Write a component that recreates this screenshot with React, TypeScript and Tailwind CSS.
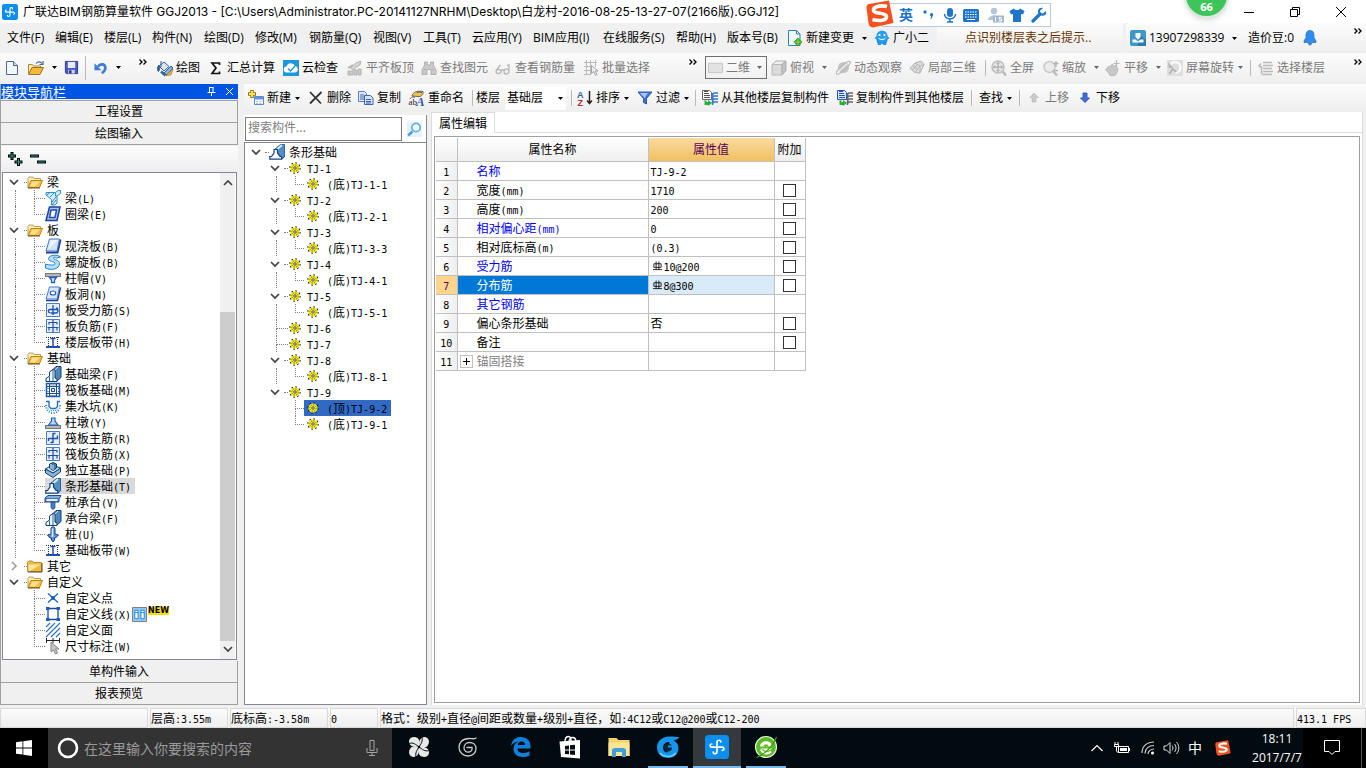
import React from "react";

/* ---------- fonts ---------- */

const UI_FONT = "font-['Open_Sans','Noto_Sans_CJK_SC',sans-serif]";
const SONG_FONT = "font-['Noto_Sans_CJK_SC',sans-serif]";

/* Latin runs sit on a six pixel grid, beside twelve pixel Chinese glyphs. */
function Mixed({ children }: { children: string }) {
  const parts = children.split(/([\x20-\x7e]+)/).filter(Boolean);
  return (
    <span className={`${SONG_FONT} whitespace-pre`}>
      {parts.map((p, i) =>
        /^[\x20-\x7e]/.test(p) ? (
          <span key={i} className="font-['DejaVu_Sans_Mono',monospace] text-[10px] leading-none">
            {p}
          </span>
        ) : (
          <span key={i}>{p}</span>
        )
      )}
    </span>
  );
}

/* ---------- icons ---------- */

const B = "#1f5fae";
const art: Record<string, React.ReactNode> = {
  file: (
    <>
      <path d="M2.5 1.5h7l4 4v9h-11z" fill="#f3f8ff" stroke="#47678f" />
      <path d="M9.500 1.500v4h4" fill="#cfdff2" stroke="#47678f" />
    </>
  ),
  open: (
    <>
      <path d="M.5 13.5v-9h4l1 1.500h7v3" fill="#fbe9ac" stroke="#a8893c" />
      <path d="M.5 14.500 4 7.500h11.500L12 14.500z" fill="#f2b93b" stroke="#9a7422" />
      <path d="M8 3.500c2-2.500 4.500-2 6 0M15 1v3.500h-3.500" fill="none" stroke="#4a6b94" strokeWidth="1.200" />
    </>
  ),
  folderOpen: (
    <>
      <path d="M1 13.500v-9l1-1.500h4l1 1.500h6.500v3" fill="#fbeeb9" stroke="#c2a052" />
      <path d="M1 13.500 4 6.500h11.500L12.500 13.500z" fill="#f7c23a" stroke="#b58526" />
      <path d="M3 12.500 5 7.500h8l-5 5z" fill="#fde08a" />
      <path d="M1 14h12" stroke="#6e531c" />
    </>
  ),
  folder: (
    <>
      <path d="M.5 13.500v-9l1-1.500h4l1 1.500h8v9z" fill="#f3b93a" stroke="#b5904a" />
      <path d="M1.500 6.500h12L3 13H1.500z" fill="#fce6a2" />
      <path d="M15 5v9H1" fill="none" stroke="#5c4a20" />
    </>
  ),
  save: (
    <>
      <path d="M1.500 1.500h13v13h-12l-1-1z" fill="#4a56c8" stroke="#2c3590" />
      <path d="M4 2h8v6.500H4z" fill="#e8ebfa" />
      <path d="M4.500 10.500h7v4h-7z" fill="#cdd3ea" />
      <path d="M5.500 11h2.500v3.500H5.500z" fill="#252f7d" />
    </>
  ),
  undo: (
    <>
      <path d="M4.500 6.500C7 2.500 13 3 13 8c0 3-2 4.500-4 6" fill="none" stroke="#3e7ad8" strokeWidth="3" />
      <path d="M.5 2.500v8h8z" fill="#3e7ad8" />
    </>
  ),
  draw: (
    <>
      <path d="M2 6l5-4 5 4.500-5 4.500z" fill="#dbe7f5" stroke="#345f95" />
      <path d="M4 1v6M2 5C0 7 0 10 1.500 11.500 3 9 3 7.500 2.500 6" fill="#345f95" stroke="#345f95" />
      <path d="M7 13l7-7 2 2-6 7z" fill="#8db2e2" stroke="#345f95" />
      <path d="M9 15.500 16 9l-2 6z" fill="#efb93b" stroke="#8c6a1c" strokeWidth=".6" />
      <path d="M4 11.500l4.500 4" stroke="#345f95" strokeWidth="2.500" />
    </>
  ),
  sigma: <path d="M11.500 5V3H4l4 5-4 5.500h7.500v-2" fill="none" stroke="#111" strokeWidth="1.700" />,
  cloud: (
    <>
      <path d="M0 0h16v16H0z" fill="#2094dc" />
      <path d="M4 12.500a3 3 0 0 1-.5-6 4.500 4.500 0 0 1 8.500-.5 3.300 3.300 0 0 1 0 6.500z" fill="#fff" />
      <path d="M5 8.500l2.500 2.500L12 6" fill="none" stroke="#2094dc" strokeWidth="1.400" />
    </>
  ),
  level: (
    <>
      <path d="M3 8l6-5 5-2-1 4-4 2-2 3z" fill="#d4d4d4" stroke="#b5b5b5" />
      <path d="M1 11h5v4H1zM7 10h3v5H7zM11 9h3v6h-3z" fill="#c8c8c8" stroke="#b5b5b5" />
      <path d="M1 8l5-3" stroke="#b5b5b5" strokeWidth="1.500" />
    </>
  ),
  binoc: (
    <path d="M3.500 2h3v3h3V2h3v3l2.500 5v4.500h-5V9.500H6v5H1V10l2.500-5z M3 9.500h2M11 9.500h2" fill="#c9c9c9" stroke="#a8a8a8" strokeWidth=".8" />
  ),
  glasses: (
    <path d="M0 11.500a2.500 2 0 1 0 5 0 2.500 2 0 1 0-5 0M5 11c1-1.500 2-1.500 3-.5M8 11.500a2.500 2.500 0 1 0 5 0 2.500 2.500 0 1 0-5 0M0 10.500l4.500-5.500M13 10.500V5l-2 .5" fill="none" stroke="#b9b9b9" strokeWidth="1.400" />
  ),
  batch: (
    <>
      <path d="M1 2.500h13M1 6.500h8M1 10.500h6M1 14.500h6M3.500 0v15M7.500 0v15M12.500 0v7" fill="none" stroke="#b9b9b9" />
      <path d="M8.500 5.500v8l2-2 2 4 1.500-1-2-3.500h3z" fill="#eee" stroke="#a5a5a5" />
    </>
  ),
  flat: <path d="M.5 3.500h15v10H.5z" fill="#e2e2e2" stroke="#c4c4c4" />,
  cube: (
    <>
      <path d="M1 4.500 5 1h10L11 4.500z" fill="#eee" stroke="#b0b0b0" />
      <path d="M1 4.500h10V15H1z" fill="#dadada" stroke="#b8b8b8" />
      <path d="M11 4.500 15 1v10l-4 4z" fill="#c2c2c2" stroke="#b0b0b0" />
    </>
  ),
  orbit: (
    <>
      <circle cx="8.500" cy="7.500" r="5.500" fill="#c4c4c4" />
      <path d="M1.500 14C0 11 12 0 15 1.500S4 16 1.500 14z" fill="none" stroke="#bcbcbc" strokeWidth="1.300" />
      <path d="M4 11 12 4" stroke="#eee" strokeWidth="1.300" />
    </>
  ),
  local3d: (
    <path d="M1 8.500 6 3l5 3-5 6.500zM3.500 5.500l5 4M6 3 12 1l3 3.500-4 1.500M15 4.500 11 13l-5-.5M8.500 4.500l-5 5.500M11 6v7" fill="#dcdcdc" stroke="#b3b3b3" />
  ),
  full: (
    <>
      <circle cx="7" cy="7" r="6" fill="#e6e6e6" stroke="#bdbdbd" strokeWidth="1.500" />
      <path d="M7 2.500v9M2.500 7h9M5.500 4 7 2.500 8.500 4M5.500 10 7 11.500 8.500 10M4 5.500 2.500 7 4 8.500M10 5.500 11.500 7 10 8.500" fill="none" stroke="#a2a2a2" />
      <path d="M11.500 11.500l3.500 4" stroke="#b8b8b8" strokeWidth="2.500" />
    </>
  ),
  zoom: (
    <>
      <circle cx="6.500" cy="7" r="5.500" fill="#ececec" stroke="#c8c8c8" strokeWidth="1.500" />
      <path d="M13 1v6M10.500 3.500h5M11 10.500h4" stroke="#b0b0b0" strokeWidth="1.300" />
      <path d="M10 11l4 4.500" stroke="#bcbcbc" strokeWidth="2.500" />
    </>
  ),
  hand: (
    <>
      <path d="M2 8l2-2 2 1V5l2-.5 1 1.500 2-.5.5 2 1.500 1-1 4-2 3H5L3 12 .5 10z" fill="#c8c8c8" stroke="#bcbcbc" />
      <path d="M11.500 0v7M8.500 3.500h6" stroke="#b8b8b8" strokeWidth="1.200" />
    </>
  ),
  rotate: (
    <>
      <path d="M0 0h16v16H0z" fill="#dedede" />
      <path d="M3 5.500A5.500 5.500 0 1 1 8.500 13" fill="none" stroke="#fafafa" strokeWidth="2.500" />
      <path d="M1.500 2v6h5z" fill="#b8b8b8" />
      <path d="M2.500 14l3-5 4 3" fill="none" stroke="#a8a8a8" strokeWidth="1.400" />
    </>
  ),
  floors: (
    <path d="M5 2.500h9M5 5.500h10M5 8.500h9M5 11.500h10M4 14.500h10M3 3.500 1 6l2.500 2M3.500 6v8" fill="none" stroke="#b9b9b9" strokeWidth="1.500" />
  ),
  create: (
    <>
      <path d="M6.500 6.500h9v8h-9z" fill="#fff" stroke="#5a8ad0" />
      <path d="M7 7h8v2.500H7z" fill="#5f93e8" />
      <path d="M8 11.500h2M11.500 11.500h2M8 13.500h2M11.500 13.500h2" stroke="#9fbdea" />
      <path d="M4 0v8M0 4h8" stroke="#8a7420" strokeWidth="3.500" />
      <path d="M4 1v6M1 4h6" stroke="#ffe24a" strokeWidth="2" />
    </>
  ),
  del: <path d="M2 2 13 13.500M13.500 2 2 13.500" fill="none" stroke="#333" strokeWidth="1.800" />,
  copy: (
    <>
      <path d="M.5 1.500h6l2 2v8h-8z" fill="#dfe9fa" stroke="#5a7fc8" />
      <path d="M2 5h4M2 7h4M2 9h4" stroke="#3b64b5" />
      <path d="M6.500 5.500h6l2.500 2.500v6.500H6.500z" fill="#d6e3fb" stroke="#3b64b5" />
      <path d="M8 9.500h5M8 11.500h5M8 13h5" stroke="#3b64b5" />
    </>
  ),
  rename: (
    <>
      <path d="M3 6C4 2 8 .5 14 1.500c1 3-2 5.500-5 5z" fill="#efc34d" stroke="#666" />
      <path d="M8 3c2-1.500 4-1 5 0M1 9c2-3 4-2 5-1" fill="none" stroke="#555" />
      <text x="-.5" y="15" fontSize="9" fontFamily="Liberation Serif" fill="#222">ab</text>
      <text x="7" y="15.500" fontSize="13" fontStyle="italic" fontWeight="bold" fontFamily="Liberation Serif" fill="#2b5cad">A</text>
    </>
  ),
  sort: (
    <>
      <text x="0" y="7.500" fontSize="9" fontWeight="bold" fontFamily="Liberation Sans" fill="#3c5fa8">A</text>
      <text x=".5" y="15.500" fontSize="9" fontWeight="bold" fontFamily="Liberation Sans" fill="#a8323c">Z</text>
      <path d="M12.500 1v12.500M10 10.500l2.500 3 2.500-3" fill="none" stroke="#222" strokeWidth="1.500" />
    </>
  ),
  filter: (
    <>
      <path d="M1 2h14L9.500 8.500V14l-3-1.500v-4z" fill="#3f73dc" stroke="#2b56b4" />
      <path d="M3 3h8L7.500 8z" fill="#a8c5fa" />
    </>
  ),
  copyFrom: (
    <>
      <path d="M.5.5h7l2 2v7h-9z" fill="#fff" stroke="#666" />
      <path d="M2 3.500h5M2 5.500h6M2 7.500h6M2 1.500h4" stroke="#555" />
      <path d="M2.500 10.500v4.500h3.500v1l4-3-4-3v2H4.500v-1.500z" fill="#26b33a" />
      <path d="M10.500 4.500 12 3h4M10.500 7.500 12 6h4M10.500 10.500 12 9h4M10.500 13.500 12 12h4M10.500 3v12" fill="none" stroke="#3a76d0" strokeWidth="1.500" />
    </>
  ),
  copyTo: (
    <>
      <path d="M.5.5h7l2 2v7h-9z" fill="#dce8ff" stroke="#2451b8" />
      <path d="M2 3.500h5M2 5.500h6M2 7.500h6M2 1.500h4" stroke="#2451b8" />
      <path d="M2.500 10.500v4.500h3.500v1l4-3-4-3v2H4.500v-1.500z" fill="#26b33a" />
      <path d="M10.500 4.500 12 3h4M10.500 7.500 12 6h4M10.500 10.500 12 9h4M10.500 13.500 12 12h4M10.500 3v12" fill="none" stroke="#666" strokeWidth="1.500" />
    </>
  ),
  up: <path d="M8 3l4.500 4.500H10V12H6V7.500H3.500z" fill="#c9c9c9" stroke="#b8b8b8" strokeWidth=".6" />,
  down: <path d="M8 12.500 12.500 8H10V3H6v5H3.500z" fill="#3f6fe0" stroke="#2546a0" strokeWidth=".8" />,
  change: (
    <>
      <path d="M1.500.5h8l3.500 3.500v11.500H1.500z" fill="#eef8fd" stroke="#2d83ad" />
      <path d="M9.500.5V4H13" fill="none" stroke="#2d83ad" />
      <path d="M11 7.500 15.500 12 11 16.500l-4.500-4.500z" fill="#3fa023" />
      <path d="M11 9v6M8 12h6" stroke="#8ae05c" />
    </>
  ),
  mascot: (
    <>
      <path d="M3 6C1 1 15 1 13 6l2.500 2-2 1.500c0 2.500-1 3-1.500 5.500H9.500L8 13.500 6.500 15H4c-.5-2.500-1.500-3-1.500-5.500L.5 8z" fill="#2196e8" />
      <circle cx="8" cy="6" r="5.500" fill="#2aa0ee" />
      <circle cx="5.500" cy="5" r="1.100" fill="#fff" />
      <circle cx="10.500" cy="5" r="1.100" fill="#fff" />
      <path d="M4.500 8c1.500 2 5.500 2 7 0" fill="none" stroke="#fff" />
    </>
  ),
  user: (
    <>
      <rect width="16" height="16" rx="2" fill="#3f97cb" />
      <path d="M11 6l5 4v6H7z" fill="#2f7cab" />
      <path d="M5.500 3h5v4L8 9.500 5.500 7z" fill="#fff" />
      <path d="M2.500 9.500h3L8 11.500l2.500-2h3v3h-11z" fill="#fff" />
    </>
  ),
  bell: <path d="M8 .5c4.500 0 4 4.500 4 7l2 3.500v1.500H2V11l2-3.500c0-2.500-.5-7 4-7zM6 13.500h4l-2 2z" fill="#2d8cf0" stroke="#1c5fae" strokeWidth=".6" />,
  search: (
    <>
      <path d="M1 1h15v15H1z" fill="#e6f3fc" />
      <path d="M6.500 10.500 2 14.500" stroke="#4b9ed8" strokeWidth="2.400" />
      <circle cx="10" cy="6.500" r="4.200" fill="#fff" stroke="#5fb2e8" strokeWidth="1.700" />
    </>
  ),
  beam: (
    <>
      <path d="M1 2.500h9.500L13 .5h2.500v3L12 6v7l-2 2H6.500V9.500L1 5z" fill="#d5ecfc" stroke="#2a8fd0" />
      <path d="M2 5l3-2.500M5 7l4.500-4.500M7 12l4-5M7 15l4-5M10.500 2.500V6H12" fill="none" stroke="#2a8fd0" />
    </>
  ),
  ring: (
    <>
      <path d="M4.500 1h10.500L12 14.500H1z" fill="#a9c4ee" stroke="#1c3f9c" strokeWidth="1.500" />
      <path d="M6 4h5.500L10 11.500H4.500z" fill="#fff" stroke="#1c4fb0" strokeWidth="1.500" />
    </>
  ),
  slab: (
    <>
      <path d="M1 14.500h11.500L15.500 1.500" fill="none" stroke="#1c3f9c" strokeWidth="2" />
      <path d="M4.500 1h10L12 13H1z" fill="#d0e2fc" stroke="#4a78c8" />
      <path d="M5.500 2h7L4 11z" fill="#eef5ff" />
    </>
  ),
  spiral: (
    <path d="M15.500 3C12 0 4 1 3.500 4.500S10 7 10 9.500 4 11 .5 10v4c6 3 14 1 14-4.500 0-4-6-3.500-6-5.500 0-1 2-1 3 0z" fill="#b5def7" stroke="#1f82c4" />
  ),
  cap: (
    <>
      <path d="M0 3h16v4H0z" fill="#777" />
      <path d="M1 5h14" stroke="#ccc" strokeWidth="1.500" />
      <path d="M4.500 7.500h7l-2 2.500v2.500h-3V10z" fill="#dbeafc" stroke="#1f5fc4" strokeWidth="1.300" />
    </>
  ),
  hole: (
    <>
      <path d="M1 14.500h11.500L15.500 1.500" fill="none" stroke="#1c3f9c" strokeWidth="1.500" />
      <path d="M4.500 1h10L12 13H1z" fill="#d9e8fd" stroke="#4a78c8" />
      <ellipse cx="8" cy="7" rx="2.700" ry="2" fill="#fff" stroke="#2560c8" strokeWidth="1.200" />
    </>
  ),
  rebarS: (
    <>
      <path d="M1.500 1.500h13v13h-13z" fill="#e5effc" stroke="#4a7cc8" />
      <path d="M8 3v10M5 11C2.500 10 3 7.500 5 7.500h7.500c1 0 .5 3.500-1.500 3.500H5.500M11.500 5.500l1.500 2" fill="none" stroke="#1f4fae" strokeWidth="1.300" />
    </>
  ),
  rebarF: (
    <>
      <path d="M1.500 1.500h13v13h-13z" fill="#e5effc" stroke="#4a7cc8" />
      <path d="M8 2v12M4 6.500v-2h8v2M4 12.500v-3M12 12.500v-3M2.500 9.500h11" fill="none" stroke="#1f4fae" strokeWidth="1.200" />
    </>
  ),
  rebarR: (
    <>
      <path d="M1.500 1.500h13v13h-13z" fill="#e5effc" stroke="#4a7cc8" />
      <path d="M8 3.500h2.500M8 3v10M5.500 12.500H8M3.500 8.500h9v-3M3.500 8v3" fill="none" stroke="#1f4fae" strokeWidth="1.400" />
    </>
  ),
  strip: (
    <>
      <path d="M1 13h14" stroke="#1f4fae" strokeWidth="2" />
      <path d="M5.500 4.500h5M8 4.500v8" stroke="#1f4fae" strokeWidth="1.500" />
      <path d="M3.500 3v9M12.500 3v9M1 3.500h14" stroke="#333" strokeDasharray="1 1" />
    </>
  ),
  fbeam: (
    <>
      <path d="M7 4.500 11 .5h5v11L12 15z" fill="#4f86b8" stroke="#123f70" />
      <path d="M9 5 13 1" stroke="#c9e0f2" />
      <path d="M1 15.500v-3L4.500 10V6L8 3.500l2 .5v8l2 1v2.500z" fill="#eef5fc" stroke="#123f70" />
      <path d="M4.500 10.500V15M8 4v11" stroke="#2f6aa0" />
    </>
  ),
  raft: (
    <>
      <path d="M1.500 1.500h13v13h-13z" fill="#fff" stroke={B} strokeWidth="1.500" />
      <path d="M4.500 2v12M11.500 2v12M2 4.500h12M2 11.500h12" fill="none" stroke="#174c92" />
      <path d="M6.500 6.500h3v3h-3zM6 2.500v1M8 2.500v1M10 2.500v1M6 13v1M8 13v1M10 13v1M2.500 6.500h1M2.500 9.500h1M13 6.500h1M13 9.500h1" fill="#dce9f7" stroke="#174c92" />
    </>
  ),
  pit: (
    <>
      <path d="M1 3.500h3v5l2 2h4.500l2-2v-5H15" fill="none" stroke="#1f70c8" strokeWidth="1.400" />
      <path d="M1 7c0 5 3 8 7 8s7-3 7-8" fill="none" stroke="#2f80d4" strokeWidth="2" strokeDasharray="1 1.500" />
      <path d="M3 10.500l2 2h6l2-2" fill="none" stroke="#2f80d4" strokeDasharray="1 1" />
    </>
  ),
  pier: (
    <>
      <path d="M0 11h16v4H0z" fill="#777" />
      <path d="M1 13h14" stroke="#ccc" strokeWidth="1.500" />
      <path d="M3.500 11 6.500 7V4h3.500v3l3 4z" fill="#b9d4f4" stroke="#1f5fb8" strokeWidth="1.200" />
    </>
  ),
  isolated: (
    <>
      <path d="M.5 7 8 11l7.500-5v4L8 15.500.5 11z" fill="#8fb6da" stroke="#123f70" />
      <path d="M.5 7 7 3l8.500 3L8 11z" fill="#cfe1f2" stroke="#123f70" />
      <path d="M4.500 6V2L8 .5 11.500 2v4L8 8.500z" fill="#3d78ae" stroke="#123f70" />
      <path d="M8 3v5M6 2v5" stroke="#dce9f7" />
    </>
  ),
  stripf: (
    <>
      <path d="M6 5l5.500-4.500h4L15.500 13l-2.500 2z" fill="#4f8fc4" stroke="#174c82" strokeWidth=".8" />
      <path d="M8 5.500 13 1" stroke="#d5e8f7" strokeWidth="1.800" />
      <path d="M.8 15.200v-2.700h1.700L5 9V5.500h3.500V9l2.500 3.500h1.700v2.700z" fill="#fff" stroke="#143f86" strokeWidth="1.200" />
    </>
  ),
  pilecap: (
    <>
      <path d="M0 4 3 1.500h13L14 5v3H0z" fill="#7fb0e0" stroke="#174c92" />
      <path d="M1 4.500h12v3H1z" fill="#e3effb" stroke="#174c92" strokeWidth=".7" />
      <path d="M6 8h4v6l-2 1.500L6 14z" fill="#3f7fc4" stroke="#174c92" strokeWidth=".7" />
    </>
  ),
  pile: (
    <>
      <path d="M6 3c0-3 4-3 4 0v5l3.500 1-3 3H9.500v2L8 16l-1.500-2v-2H5L2.500 9 6 8z" fill="#5d95d4" stroke="#123f80" />
      <path d="M7.500 2.500V11" stroke="#e3effb" strokeWidth="1.500" />
    </>
  ),
  cross: (
    <>
      <path d="M3 3.500l10 9M13 3.500l-10 9" stroke="#1c5cb8" strokeWidth="1.200" />
      <circle cx="8" cy="8" r="2" fill="#1c5cb8" />
    </>
  ),
  frame: (
    <>
      <path d="M3 2.500h10v11H3z" fill="#fff" stroke="#174c9c" strokeWidth="1.300" />
      <path d="M1 1h3.500v3H1zM11.500 1H15v3h-3.500zM1 12h3.500v3H1zM11.500 12H15v3h-3.500z" fill="#1c5cc4" />
    </>
  ),
  hatch: (
    <path d="M1 5l4-4M1 10l9-9M1 15 15 1M6 15l9-9M11 15l4-4" stroke="#2d72c8" strokeWidth="1.100" />
  ),
  dim: (
    <>
      <path d="M1 2.500h14M1.500 0v5M8 0v5M14.500 0v5" stroke="#222" />
      <path d="M6 4v10l2.500-2 2 4 2-1-2-4h3.500z" fill="#c4c4c4" stroke="#888" />
    </>
  ),
  gear: (
    <>
      <circle cx="8" cy="8" r="5.800" fill="none" stroke="#222" strokeWidth="1.500" strokeDasharray="1.800 2.700" />
      <circle cx="8" cy="8" r="5.200" fill="#f6ee1a" />
      <circle cx="8" cy="8" r="3.600" fill="none" stroke="#2a2a10" strokeWidth=".7" strokeDasharray="1.600 1.200" />
      <circle cx="8" cy="8" r="1.400" fill="#fff" stroke="#222" strokeWidth=".9" />
    </>
  ),
  book: (
    <>
      <path d="M.5.5h15v15H.5z" fill="#8fcbf8" stroke="#777" />
      <path d="M3 3.500h3.500v9H3zM9.500 3.500H13v9H9.500zM3 6h3.500M9.500 6H13" fill="#fff" stroke="#1f82d8" />
    </>
  ),
};

function Icon({ name, className = "size-4" }: { name: string; className?: string }) {
  return (
    <svg viewBox="0 0 16 16" className={`${className} shrink-0 overflow-visible`} aria-hidden="true">
      {art[name]}
    </svg>
  );
}

function AppLogo({ className }: { className: string }) {
  return (
    <svg viewBox="0 0 24 24" className={`${className} shrink-0`} aria-hidden="true">
      <rect width="24" height="24" rx="3.500" fill="#0a8ff0" />
      <path
        d="M12 16.500V7.500c0-3 3.800-2.800 3.800-.5M12 16.500c0 3-3.800 2.800-3.800.5M7 12.200h10M7 12.200c-2.500 0-2.500-3-.3-3.200M17 12.200c2.500 0 2.500 3 .3 3.200"
        fill="none"
        stroke="#fff"
        strokeWidth="1.700"
        strokeLinecap="round"
      />
    </svg>
  );
}

const Caret = ({ muted = false }: { muted?: boolean }) => (
  <svg viewBox="0 0 5 3" className="h-[3px] w-[5px] shrink-0" aria-hidden="true">
    <path d="M0 0h5L2.500 3z" fill={muted ? "#666" : "#000"} />
  </svg>
);

const More = () => (
  <svg viewBox="0 0 8 6" className="h-[6px] w-[8px] shrink-0" aria-hidden="true">
    <path d="M.5.5 3 3 .5 5.500M4.500.5 7 3 4.500 5.500" fill="none" stroke="#000" strokeWidth="1.300" />
  </svg>
);

const Sep = ({ className }: { className: string }) => <span className={`w-px shrink-0 bg-[#b9b9b9] ${className}`} />;

function Chevron({ open = true }: { open?: boolean }) {
  return (
    <svg viewBox="0 0 10 10" className="size-[10px] shrink-0" aria-hidden="true">
      <path
        d={open ? "M1 3l4 4 4-4" : "M3 1l4 4-4 4"}
        fill="none"
        stroke={open ? "#404040" : "#a0a0a0"}
        strokeWidth="1.700"
      />
    </svg>
  );
}

/* ---------- toolbars ---------- */

type Tool = { icon?: string; label: string; width: string; off?: boolean; caret?: string };

function ToolButton({ icon, label, width, off, caret }: Tool) {
  return (
    <button type="button" className={`flex h-full shrink-0 items-center whitespace-nowrap ${width} ${off ? "text-[#7a7a7a]" : "text-black"}`}>
      {icon && <Icon name={icon} className="mr-[3px] size-4" />}
      {label}
      {caret && (
        <span className={caret}>
          <Caret muted={off} />
        </span>
      )}
    </button>
  );
}

const menus = [
  ["文件(F)", "w-12"],
  ["编辑(E)", "w-[49px]"],
  ["楼层(L)", "w-12"],
  ["构件(N)", "w-[52px]"],
  ["绘图(D)", "w-[51px]"],
  ["修改(M)", "w-[54px]"],
  ["钢筋量(Q)", "w-16"],
  ["视图(V)", "w-[50px]"],
  ["工具(T)", "w-[49px]"],
  ["云应用(Y)", "w-[61px]"],
  ["BIM应用(I)", "w-[70px]"],
  ["在线服务(S)", "w-[73px]"],
  ["帮助(H)", "w-[51px]"],
  ["版本号(B)", "w-[60px]"],
];

const toolsA: Tool[] = [
  { icon: "draw", label: "绘图", width: "w-[51px]" },
  { icon: "sigma", label: "汇总计算", width: "w-[75px]" },
  { icon: "cloud", label: "云检查", width: "w-16" },
  { icon: "level", label: "平齐板顶", width: "w-[74px]", off: true },
  { icon: "binoc", label: "查找图元", width: "w-[75px]", off: true },
  { icon: "glasses", label: "查看钢筋量", width: "w-[87px]", off: true },
  { icon: "batch", label: "批量选择", width: "w-[106px]", off: true },
];

const toolsB: Tool[] = [
  { icon: "cube", label: "俯视", width: "w-16", off: true, caret: "ml-2" },
  { icon: "orbit", label: "动态观察", width: "w-[74px]", off: true },
  { icon: "local3d", label: "局部三维", width: "w-[76px]", off: true },
];

const toolsC: Tool[] = [
  { icon: "full", label: "全屏", width: "w-[52px]", off: true },
  { icon: "zoom", label: "缩放", width: "w-[62px]", off: true, caret: "ml-2" },
  { icon: "hand", label: "平移", width: "w-[62px]", off: true, caret: "ml-2" },
  { icon: "rotate", label: "屏幕旋转", width: "w-[83px]", off: true, caret: "ml-1" },
];

const strip = "bg-linear-to-b from-[#fcfcfc] to-[#eeeeee]";

function TitleBar() {
  return (
    <header className="flex h-[23px] items-center bg-white pl-[2px] pr-[2px]">
      <AppLogo className="size-4" />
      <h1 className="ml-[5px] flex-1 whitespace-nowrap text-[12px] leading-[23px] font-['Inter','Noto_Sans_CJK_SC',sans-serif]">
        广联达BIM钢筋算量软件 GGJ2013 - [C:\Users\Administrator.PC-20141127NRHM\Desktop\白龙村-2016-08-25-13-27-07(2166版).GGJ12]
      </h1>
      <div className="flex items-center">
        <button type="button" aria-label="最小化" className="flex w-[46px] justify-center">
          <svg viewBox="0 0 10 10" className="size-[10px]"><path d="M0 5.500h10" stroke="#000" /></svg>
        </button>
        <button type="button" aria-label="还原" className="flex w-[46px] justify-center">
          <svg viewBox="0 0 10 10" className="size-[10px]"><path d="M.5 2.500h7v7h-7zM2.500 2.500v-2h7v7h-2" fill="none" stroke="#000" /></svg>
        </button>
        <button type="button" aria-label="关闭" className="flex w-[46px] justify-center">
          <svg viewBox="0 0 10 10" className="size-[10px]"><path d="M0 0l10 10M10 0 0 10" stroke="#000" /></svg>
        </button>
      </div>
    </header>
  );
}

function SogouMark({ className }: { className: string }) {
  return (
    <svg viewBox="0 0 28 28" className={`${className} shrink-0`} aria-hidden="true">
      <path d="M3 4 23 .5 27.500 23 7 27.500C4 27 3 26 2.500 23L.5 8C.5 5.500 1 4.500 3 4z" fill="#f4511e" />
      <path d="M21 6.500C14 5 7 6.500 7.500 10.500c.5 4 12.500 1.500 13 6 .4 4-7 5-14 3" fill="none" stroke="#fff" strokeWidth="3.600" />
    </svg>
  );
}

function ImeBar() {
  return (
    <div className="absolute left-[866px] top-0 flex h-7 items-center">
      <SogouMark className="z-10 size-7" />
      <div className="-ml-3 mt-[2px] flex h-[24px] items-center border border-[#b8cce4] bg-white pl-4 text-[#1f75cc]">
        <span className="w-[23px] text-[14px] font-bold leading-5">英</span>
        <svg viewBox="0 0 12 16" className="mr-[9px] h-4 w-3" aria-hidden="true">
          <circle cx="3" cy="5" r="1.700" fill="#1f75cc" />
          <path d="M8 7.500a1.600 1.600 0 1 1 2.500 1.500c0 2-1 3-2.500 3.500 1-1 1.300-2 1-3.300A1.500 1.500 0 0 1 8 7.500z" fill="#1f75cc" />
        </svg>
        <svg viewBox="0 0 14 16" className="mr-[6px] h-4 w-[14px]" aria-hidden="true">
          <rect x="4" y="1" width="6" height="9" rx="3" fill="#1f75cc" />
          <path d="M1.500 7c0 6.500 11 6.500 11 0M7 12v3M4 15h6" fill="none" stroke="#1f75cc" strokeWidth="1.500" />
        </svg>
        <svg viewBox="0 0 16 13" className="mr-2 h-[13px] w-4" aria-hidden="true">
          <rect width="16" height="13" rx="1.500" fill="#1f75cc" />
          <path d="M2 3h12M2 5.500h12M2 8h12" stroke="#fff" strokeWidth="1.200" strokeDasharray="1.500 1" />
          <path d="M4 10.500h8" stroke="#fff" />
        </svg>
        <svg viewBox="0 0 17 16" className="mr-[5px] h-4 w-[17px]" aria-hidden="true">
          <circle cx="7" cy="4" r="3.200" fill="#b7c4da" />
          <path d="M1 13c0-6 12-6 12 0z" fill="#b7c4da" />
          <rect x="6" y="8.500" width="11" height="7" fill="#a7b6d0" />
          <path d="M8.500 10v4.500M14.500 10.500h-2.500v1.500h2.500v2h-3" fill="none" stroke="#fff" />
        </svg>
        <svg viewBox="0 0 16 14" className="mr-[6px] h-[14px] w-4" aria-hidden="true">
          <path d="M5 .5c1 2 5 2 6 0L15.500 3 14 6.500l-2-.5v8H4V6l-2 .5L.5 3z" fill="#1f75cc" />
        </svg>
        <svg viewBox="0 0 16 16" className="mr-[3px] size-4" aria-hidden="true">
          <path d="M2 14 9 7" stroke="#1f75cc" strokeWidth="3.200" strokeLinecap="round" />
          <path d="M14.700 4 12 6.500 9.500 6 9 3.800 12 1C8 0 6 3.500 7.500 6.500S14 9.500 15.300 6.500z" fill="#1f75cc" />
        </svg>
      </div>
    </div>
  );
}

function MenuBar() {
  return (
    <nav className="flex h-[30px] items-center bg-[#f0f0f0] pl-[7px] text-[12px]">
      {menus.map(([label, w]) => (
        <button type="button" key={label} className={`h-full shrink-0 whitespace-nowrap text-left ${w}`}>
          {label}
        </button>
      ))}
      <ToolButton icon="change" label="新建变更" width="w-[87px]" caret="ml-2" />
      <ToolButton icon="mascot" label="广小二" width="w-[63px]" />
      <a href="#tip" className={`flex h-full w-[186px] shrink-0 items-center pl-7 text-[#663300] ${strip}`}>
        点识别楼层表之后提示..
      </a>
      <div className={`ml-[3px] flex h-full flex-1 items-center rounded-l pl-1 ${strip}`}>
        <ToolButton icon="user" label="13907298339" width="w-[118px]" caret="ml-2" />
        <ToolButton label="造价豆:0" width="w-[54px]" />
        <button type="button" aria-label="通知">
          <Icon name="bell" />
        </button>
        <button type="button" aria-label="更多" className="ml-auto mr-1 self-start pt-[5px]">
          <More />
        </button>
      </div>
    </nav>
  );
}

function MainToolBar() {
  return (
    <div className={`flex h-[31px] items-center pb-[2px] pl-1 text-[12px] ${strip}`}>
      <button type="button" aria-label="新建" className="w-6"><Icon name="file" /></button>
      <button type="button" aria-label="打开" className="flex w-9 items-center gap-2"><Icon name="open" /><Caret /></button>
      <button type="button" aria-label="保存"><Icon name="save" className="size-[15px]" /></button>
      <Sep className="ml-[6px] mr-2 h-6" />
      <button type="button" aria-label="撤销" className="flex w-[45px] items-center gap-2"><Icon name="undo" className="size-[14px]" /><Caret /></button>
      <button type="button" aria-label="更多" className="mr-[10px] self-start pt-[6px]"><More /></button>
      {toolsA.map((t) => <ToolButton key={t.label} {...t} />)}
      <button type="button" aria-label="更多" className="mr-2 self-start pt-[6px]"><More /></button>
      <div className="mr-1 flex h-[23px] w-[62px] items-center border border-[#6f6f6f] pl-[2px] text-[#7a7a7a]">
        <Icon name="flat" className="mr-[3px] size-[15px]" />
        <select aria-label="视图模式" className="w-[31px] appearance-none bg-transparent outline-none">
          <option>二维</option>
        </select>
        <Caret muted />
      </div>
      {toolsB.map((t) => <ToolButton key={t.label} {...t} />)}
      <Sep className="mr-[5px] h-4" />
      {toolsC.map((t) => <ToolButton key={t.label} {...t} />)}
      <Sep className="mr-[7px] h-4" />
      <ToolButton icon="floors" label="选择楼层" width="w-[68px]" off />
      <button type="button" aria-label="更多" className="ml-auto mr-1 self-start pt-[6px]"><More /></button>
    </div>
  );
}

function ComponentToolBar() {
  return (
    <div className={`flex h-7 items-center pl-1 text-[12px] ${strip}`}>
      <ToolButton icon="create" label="新建" width="w-[60px]" caret="ml-1" />
      <ToolButton icon="del" label="删除" width="w-[50px]" />
      <ToolButton icon="copy" label="复制" width="w-[51px]" />
      <ToolButton icon="rename" label="重命名" width="w-[63px]" />
      <Sep className="mr-[3px] h-4" />
      <label htmlFor="floor" className="w-[29px] shrink-0">楼层</label>
      <div className="flex h-[23px] w-[61px] shrink-0 items-center bg-white pl-[2px]">
        <select id="floor" className="w-[51px] appearance-none bg-transparent outline-none">
          <option>基础层</option>
        </select>
        <Caret />
      </div>
      <Sep className="mr-[5px] ml-[5px] h-4" />
      <ToolButton icon="sort" label="排序" width="w-[60px]" caret="ml-1" />
      <ToolButton icon="filter" label="过滤" width="w-[58px]" caret="ml-1" />
      <Sep className="mr-[6px] h-4" />
      <ToolButton icon="copyFrom" label="从其他楼层复制构件" width="w-[135px]" />
      <ToolButton icon="copyTo" label="复制构件到其他楼层" width="w-[134px]" />
      <Sep className="mr-[7px] h-4" />
      <ToolButton label="查找" width="w-10" caret="ml-1" />
      <Sep className="mr-[6px] h-4" />
      <ToolButton icon="up" label="上移" width="w-[51px]" off />
      <ToolButton icon="down" label="下移" width="w-[51px]" />
    </div>
  );
}

/* ---------- module navigation ---------- */

type Leaf = { icon: string; label: string; active?: boolean; badge?: boolean };
type Group = { label: string; open: boolean; items: Leaf[] };

const groups: Group[] = [
  { label: "梁", open: true, items: [{ icon: "beam", label: "梁(L)" }, { icon: "ring", label: "圈梁(E)" }] },
  {
    label: "板",
    open: true,
    items: [
      { icon: "slab", label: "现浇板(B)" },
      { icon: "spiral", label: "螺旋板(B)" },
      { icon: "cap", label: "柱帽(V)" },
      { icon: "hole", label: "板洞(N)" },
      { icon: "rebarS", label: "板受力筋(S)" },
      { icon: "rebarF", label: "板负筋(F)" },
      { icon: "strip", label: "楼层板带(H)" },
    ],
  },
  {
    label: "基础",
    open: true,
    items: [
      { icon: "fbeam", label: "基础梁(F)" },
      { icon: "raft", label: "筏板基础(M)" },
      { icon: "pit", label: "集水坑(K)" },
      { icon: "pier", label: "柱墩(Y)" },
      { icon: "rebarR", label: "筏板主筋(R)" },
      { icon: "rebarF", label: "筏板负筋(X)" },
      { icon: "isolated", label: "独立基础(P)" },
      { icon: "stripf", label: "条形基础(T)", active: true },
      { icon: "pilecap", label: "桩承台(V)" },
      { icon: "fbeam", label: "承台梁(F)" },
      { icon: "pile", label: "桩(U)" },
      { icon: "strip", label: "基础板带(W)" },
    ],
  },
  { label: "其它", open: false, items: [] },
  {
    label: "自定义",
    open: true,
    items: [
      { icon: "cross", label: "自定义点" },
      { icon: "frame", label: "自定义线(X)", badge: true },
      { icon: "hatch", label: "自定义面" },
      { icon: "dim", label: "尺寸标注(W)" },
    ],
  },
];

const dots = "border-dotted border-[#808080]";

/* A stub from the parent's vertical line; the last child ends the line. */
function Elbow({ last, width }: { last: boolean; width: string }) {
  return (
    <span className={`flex h-4 shrink-0 flex-col ${width}`}>
      <span className={`h-[9px] border-b border-l ${dots}`} />
      {!last && <span className={`h-[7px] border-l ${dots}`} />}
    </span>
  );
}

function ModuleTree() {
  return (
    <div role="tree" aria-label="模块" className="min-w-0 flex-1 pt-px text-[12px] leading-4">
      {groups.map((g, gi) => (
        <div key={g.label}>
          <div role="treeitem" aria-expanded={g.open} className="flex h-4 items-center pl-[6px]">
            <Chevron open={g.open} />
            <span className={`ml-[5px] w-[3px] border-b ${dots}`} />
            <Icon name={g.open ? "folderOpen" : "folder"} className="mr-1 size-4" />
            <Mixed>{g.label}</Mixed>
          </div>
          {g.items.map((it, i) => (
            <div key={it.label} role="treeitem" className="flex h-4 items-center pl-3">
              <span className={`h-4 w-[19px] shrink-0 ${gi < 3 ? `border-l ${dots}` : ""}`} />
              <Elbow last={i === g.items.length - 1} width="w-[11px]" />
              <span className={`flex h-4 items-center whitespace-nowrap ${it.active ? "bg-[#d9d9d9] pr-1" : ""}`}>
                <Icon name={it.icon} className="mr-1 size-4" />
                <Mixed>{it.label}</Mixed>
              </span>
              {it.badge && (
                <span className="flex items-start gap-px pl-px">
                  <Icon name="book" className="size-[15px]" />
                  <span className="bg-[#ffe000] text-[8px] font-bold leading-[8px] font-['DejaVu_Sans',sans-serif]">NEW</span>
                </span>
              )}
            </div>
          ))}
        </div>
      ))}
    </div>
  );
}

function NavTab({ label }: { label: string }) {
  return (
    <button type="button" className="h-[22px] w-full shrink-0 border-b border-r border-[#a0a0a0] bg-[#f0f0f0] text-[12px] leading-5">
      <Mixed>{label}</Mixed>
    </button>
  );
}

function ModulePanel() {
  return (
    <aside className="flex w-[238px] shrink-0 flex-col border-l border-[#a0a0a0]">
      <div className="flex h-[15px] items-center bg-[#0054e3] pr-[4px] text-[12px] leading-[15px] text-white">
        <h2 className={`flex-1 text-[13px] ${SONG_FONT}`}>模块导航栏</h2>
        <button type="button" aria-label="固定" className="mr-[9px]">
          <svg viewBox="0 0 9 9" className="size-[9px]"><path d="M2.500 0v5.500M6 0v5.500M2 .5h4.500M.5 5.500h8M4.500 5.500V9" fill="none" stroke="#fff" /></svg>
        </button>
        <button type="button" aria-label="关闭面板">
          <svg viewBox="0 0 9 9" className="size-[9px]"><path d="M1 1l7 7M8 1 1 8" stroke="#fff" /></svg>
        </button>
      </div>
      <div className="mt-px flex flex-col border-t border-[#a0a0a0]">
        <NavTab label="工程设置" />
        <NavTab label="绘图输入" />
      </div>
      <div className={`mt-px flex h-[26px] items-center gap-[7px] pl-[6px] ${strip}`}>
        <button type="button" aria-label="全部展开">
          <svg viewBox="0 0 16 16" className="size-4"><path d="M5 1v8M1 5h8M11.500 7v8M7.500 11h8" stroke="#000" strokeWidth="3" /><path d="M5 2v6M2 5h6M11.500 8v6M8.500 11h6" stroke="#17a08c" /></svg>
        </button>
        <button type="button" aria-label="全部折叠">
          <svg viewBox="0 0 16 16" className="size-4"><path d="M0 5h9M7 11h9" stroke="#000" strokeWidth="3" /><path d="M1 5h7M8 11h7" stroke="#17a08c" /></svg>
        </button>
      </div>
      <div className="mx-px flex flex-1 border border-[#828790] bg-white pr-px">
        <ModuleTree />
        <div className="flex w-[15px] flex-col items-center bg-[#f0f0f0] py-[6px]">
          <svg viewBox="0 0 10 8" className="h-2 w-[10px]" aria-hidden="true"><path d="M1 6l4-4 4 4" fill="none" stroke="#444" strokeWidth="1.700" /></svg>
          <div className="mb-[4px] mt-[125px] w-full flex-1 bg-[#cdcdcd]" />
          <svg viewBox="0 0 10 8" className="h-2 w-[10px]" aria-hidden="true"><path d="M1 2l4 4 4-4" fill="none" stroke="#444" strokeWidth="1.700" /></svg>
        </div>
      </div>
      <div className="mt-px flex flex-col">
        <NavTab label="单构件输入" />
        <NavTab label="报表预览" />
      </div>
    </aside>
  );
}

/* ---------- component list ---------- */

type Part = { label: string; children: { label: string; active?: boolean }[] };

const parts: Part[] = [
  { label: "TJ-1", children: [{ label: "(底)TJ-1-1" }] },
  { label: "TJ-2", children: [{ label: "(底)TJ-2-1" }] },
  { label: "TJ-3", children: [{ label: "(底)TJ-3-3" }] },
  { label: "TJ-4", children: [{ label: "(底)TJ-4-1" }] },
  { label: "TJ-5", children: [{ label: "(底)TJ-5-1" }] },
  { label: "TJ-6", children: [] },
  { label: "TJ-7", children: [] },
  { label: "TJ-8", children: [{ label: "(底)TJ-8-1" }] },
  { label: "TJ-9", children: [{ label: "(顶)TJ-9-2", active: true }, { label: "(底)TJ-9-1" }] },
];

function ComponentPanel() {
  return (
    <section className="mt-[3px] flex w-[183px] shrink-0 flex-col border-b border-r border-[#828790] bg-white">
      <div className="flex h-[27px] items-center pl-px">
        <input
          type="text"
          aria-label="搜索构件"
          placeholder="搜索构件..."
          className={`h-6 w-[157px] border border-[#7a7a7a] px-[2px] pb-1 text-[12px] outline-none placeholder:text-[#808080] ${SONG_FONT}`}
        />
        <button type="button" aria-label="搜索" className="ml-1">
          <Icon name="search" />
        </button>
      </div>
      <div role="tree" aria-label="构件" className="flex-1 border-l border-t border-[#828790] pt-px text-[12px] leading-4">
        <div role="treeitem" aria-expanded className="flex h-4 items-center pl-[6px]">
          <Chevron />
          <span className={`ml-1 w-1 border-b ${dots}`} />
          <Icon name="stripf" className="mr-1 size-4" />
          <Mixed>条形基础</Mixed>
        </div>
        {parts.map((p, pi) => (
          <div key={p.label}>
            <div role="treeitem" className={`flex h-4 items-center ${p.children.length ? "pl-[25px]" : "pl-[31px]"}`}>
              {p.children.length ? (
                <>
                  <Chevron />
                  <span className={`ml-1 w-1 border-b ${dots}`} />
                </>
              ) : (
                <Elbow last={false} width="w-3" />
              )}
              <Icon name="gear" className="mr-[5px] size-[14px]" />
              <Mixed>{p.label}</Mixed>
            </div>
            {p.children.map((c, i) => (
              <div key={c.label} role="treeitem" className="flex h-4 items-center pl-[31px]">
                <span className={`h-4 w-[19px] shrink-0 ${pi < parts.length - 1 ? `border-l ${dots}` : ""}`} />
                <Elbow last={i === p.children.length - 1} width="w-[9px]" />
                <span className={`flex h-4 items-center pl-[2px] pr-1 ${c.active ? "bg-[#316ac5]" : ""}`}>
                  <Icon name="gear" className="mr-[7px] size-[14px]" />
                  <Mixed>{c.label}</Mixed>
                </span>
              </div>
            ))}
          </div>
        ))}
      </div>
    </section>
  );
}

/* ---------- property table ---------- */

type Prop = { name: string; value: string; tone?: string; check?: boolean; rebar?: boolean; active?: boolean; expand?: boolean };

const props: Prop[] = [
  { name: "名称", value: "TJ-9-2", tone: "text-[#0000ff]" },
  { name: "宽度(mm)", value: "1710", check: true },
  { name: "高度(mm)", value: "200", check: true },
  { name: "相对偏心距(mm)", value: "0", tone: "text-[#0000ff]", check: true },
  { name: "相对底标高(m)", value: "(0.3)", check: true },
  { name: "受力筋", value: "10@200", tone: "text-[#0000ff]", check: true, rebar: true },
  { name: "分布筋", value: "8@300", tone: "text-white", check: true, rebar: true, active: true },
  { name: "其它钢筋", value: "", tone: "text-[#0000ff]" },
  { name: "偏心条形基础", value: "否", check: true },
  { name: "备注", value: "", check: true },
  { name: "锚固搭接", value: "", tone: "text-[#808080]", expand: true },
];

const RebarSign = () => (
  <svg viewBox="0 0 10 10" className="mx-[2px] h-[10px] w-[9px] shrink-0" aria-hidden="true">
    <path d="M3.500 0v9M6.500 0v9M1 2.500h8v4H1zM0 9h10" fill="none" stroke="#000" strokeWidth=".9" />
  </svg>
);

const cell = "border border-[#c0c0c0] p-0";
const headCell = "border-b border-r border-[#c0c0c0] p-0 font-normal";
const line = "flex h-[18px] items-center";

function PropertyTable() {
  return (
    <table className="w-[369px] table-fixed border-collapse text-[12px] leading-4">
      <colgroup>
        <col className="w-[21px]" />
        <col className="w-[191px]" />
        <col className="w-[126px]" />
        <col className="w-[31px]" />
      </colgroup>
      <thead>
        <tr className="bg-linear-to-b from-white to-[#eeeeee]">
          <th className={headCell} aria-label="序号" />
          <th className={headCell}><div className="leading-[22px]"><Mixed>属性名称</Mixed></div></th>
          <th className={`${headCell} bg-linear-to-b from-[#f9d99f] to-[#f1c15f] text-[#5a005a]`}>
            <Mixed>属性值</Mixed>
          </th>
          <th className={headCell}><Mixed>附加</Mixed></th>
        </tr>
      </thead>
      <tbody>
        {props.map((p, i) => (
          <tr key={p.name}>
            <th
              scope="row"
              className={`border-y border-r border-[#c0c0c0] p-0 font-normal ${
                p.active ? "bg-[#ffd58d] text-[#5a005a]" : "bg-linear-to-r from-white to-[#eeeeee]"
              }`}
            >
              <div className={`${line} justify-center`}><Mixed>{String(i + 1)}</Mixed></div>
            </th>
            <td className={`${cell} ${p.active ? "bg-[#0078d7]" : ""} ${p.tone ?? ""}`}>
              <div className={line}>
                {p.expand ? (
                  <button type="button" aria-label="展开" className="ml-[2px] mr-1 flex size-[13px] items-center justify-center border border-[#c0c0c0]">
                    <svg viewBox="0 0 7 7" className="size-[7px]"><path d="M0 3.500h7M3.500 0v7" stroke="#000" /></svg>
                  </button>
                ) : (
                  <span className="w-[19px]" />
                )}
                <Mixed>{p.name}</Mixed>
              </div>
            </td>
            <td className={`${cell} ${p.active ? "bg-[#d9eaf8]" : ""}`}>
              <div className={`${line} pl-[2px]`}>
                {p.rebar && <RebarSign />}
                <Mixed>{p.value}</Mixed>
              </div>
            </td>
            <td className={cell}>
              {p.check && (
                <div className={`${line} justify-center`}>
                  <input
                    type="checkbox"
                    aria-label={`附加 ${p.name}`}
                    className="size-[13px] appearance-none border border-[#333] bg-white"
                  />
                </div>
              )}
            </td>
          </tr>
        ))}
      </tbody>
    </table>
  );
}

function PropertyPanel() {
  return (
    <section className="ml-1 mr-[3px] flex min-w-0 flex-1 flex-col border-x border-[#dcdcdc] bg-white">
      <div className="flex h-[21px]">
        <button type="button" className="w-[63px] border-r border-t border-[#dcdcdc] text-[12px] leading-[18px]">
          <Mixed>属性编辑</Mixed>
        </button>
        <span className="flex-1 border-b border-[#dcdcdc]" />
      </div>
      <div className="mx-[2px] mb-[2px] mt-[3px] flex-1 border border-[#a0a0a0] pl-px pt-px">
        <PropertyTable />
      </div>
    </section>
  );
}

/* ---------- status and task bars ---------- */

function StatusBar() {
  const box = "h-5 border border-[#d9d9d9] leading-[18px] whitespace-nowrap";
  return (
    <footer className={`mt-[3px] flex h-5 gap-[2px] text-[12px] ${strip}`}>
      <span className={`${box} w-[148px]`} />
      <span className={`${box} w-[78px]`}><Mixed>层高:3.55m</Mixed></span>
      <span className={`${box} w-[98px]`}><Mixed>底标高:-3.58m</Mixed></span>
      <span className={`${box} w-12`}><Mixed>0</Mixed></span>
      <span className={`${box} flex-1`}><Mixed>格式：级别+直径@间距或数量+级别+直径，如:4C12或C12@200或C12-200</Mixed></span>
      <span className={`${box} w-[70px]`}><Mixed>413.1 FPS</Mixed></span>
    </footer>
  );
}

const Swirl = ({ color, width }: { color: string; width: string }) => (
  <path
    d="M20 3c-2 1.500-4 .5-7 .5C6 3.500 3 8 3 12.500S7 21 12 21s8-3.500 8-7.500-3-6-6.500-6S8 10 8 13s2.500 4.500 5 4 3.500-2.500 3-4.500h-5"
    fill="none"
    stroke={color}
    strokeWidth={width}
    strokeLinecap="round"
  />
);

function TaskIcon({ label, running, children }: { label: string; running?: boolean; children: React.ReactNode }) {
  return (
    <button
      type="button"
      aria-label={label}
      className={`flex h-10 shrink-0 items-center justify-center border-b-2 ${
        running ? "mx-[5px] w-10 border-[#76b9ed]" : "w-[49px] border-transparent"
      }`}
    >
      <svg viewBox="0 0 24 24" className="size-6">{children}</svg>
    </button>
  );
}

function TaskBar() {
  return (
    <div className="flex h-10 items-center bg-[#010b10] text-white">
      <button type="button" aria-label="开始" className="flex h-10 w-12 shrink-0 items-center justify-center bg-black">
        <svg viewBox="0 0 16 16" className="size-4"><path d="M0 2.300 6.500 1.300v6.200H0zM7.300 1.200 16 0v7.500H7.300zM0 8.400h6.500v6.200L0 13.700zM7.300 8.400H16V16l-8.700-1.200z" fill="#fff" /></svg>
      </button>
      <div className="flex h-10 w-[344px] shrink-0 items-center bg-[#333333] pl-[9px] pr-[14px]">
        <svg viewBox="0 0 22 22" className="size-[22px]" aria-hidden="true"><circle cx="11" cy="11" r="9" fill="none" stroke="#fff" strokeWidth="2.600" /></svg>
        <input
          type="text"
          aria-label="搜索"
          placeholder="在这里输入你要搜索的内容"
          className="ml-[5px] min-w-0 flex-1 bg-transparent text-[14px] outline-none placeholder:text-[#9a9a9a]"
        />
        <svg viewBox="0 0 12 16" className="h-4 w-3" aria-hidden="true"><path d="M4 .5h4v10H4zM1 8v4.500h10V8M6 12.500v3M3 15.500h6" fill="none" stroke="#a5a5a5" /></svg>
      </div>
      <div className="ml-[2px] flex">
        <TaskIcon label="四叶草">
          <g fill="#e8e8e8">
            <path d="M11.500 11.500C6 13 1.500 10 2 6s6-5.500 9.500-2c1.500 2 1.500 5 0 7.500z" />
            <path d="M12.500 11.500C11 6 14 1.500 18 2s5.500 6 2 9.500c-2 1.500-5 1.500-7.500 0z" />
            <path d="M12.500 12.500C18 11 22.500 14 22 18s-6 5.500-9.500 2c-1.500-2-1.500-5 0-7.500z" />
            <path d="M11.500 12.500C13 18 10 22.500 6 22S.5 16 4 12.500c2-1.500 5-1.500 7.500 0z" />
          </g>
          <path d="M12 12C9 9.500 6 7 2 8.500M12 12c2-3 4-6 3-10M12 12c3 2 6 5 10 3.500M12 12c-2 3-4 6-3 10" fill="none" stroke="#010b10" />
        </TaskIcon>
        <TaskIcon label="浏览器"><Swirl color="#c9c9c9" width="1.300" /></TaskIcon>
        <span className="w-1" />
        <TaskIcon label="Edge">
          <path d="M2 11C3 4.500 7 2 12 2c6 0 9.500 4 9.500 9v2.500H8.500c0 3 2.500 4.500 5.500 4.500 2.500 0 4.500-.6 6.500-1.800v4.300C18.500 21.500 16 22 13.500 22 8 22 4.500 18.500 4.500 14c0-3.500 2-6 4.500-7.300C5.500 7 3.500 8.500 2 11zm6.700-1h7.300c0-2-1-3.500-3.500-3.500S9 8 8.700 10z" fill="#0f7fdc" />
        </TaskIcon>
        <TaskIcon label="应用商店">
          <path d="M1.500 6.500 22 5v18.500L3 22z" fill="#fff" />
          <path d="M7 7c0-7 6-7 6-2v2M11 7c0-6 7-6 7 0" fill="none" stroke="#fff" strokeWidth="1.400" />
          <path d="M7 11l4-.5v4H7zM12 10.300l5-.6v4.800h-5zM7 15.500h4v3.800L7 19zM12 15.500h5v4.500l-5-.5z" fill="#010b10" />
        </TaskIcon>
        <TaskIcon label="文件资源管理器">
          <path d="M1.500 3h8l2 2h11v16h-21z" fill="#f5d469" />
          <path d="M1.500 7.500h21V21h-21z" fill="#fde597" />
          <path d="M5 22v-7.500l2-1.500h10l2 1.500V22h-4v-5H9v5z" fill="#3f9fd8" />
        </TaskIcon>
        <TaskIcon label="广联达" running>
          <path
            d="M23.500 2C22 4.500 19.500 5 17.500 5.500 21 7 22.500 10 22.500 13c0 6-4.500 10-10.500 10S1 19 1 12.500 6 2 13 1.500c4-.3 7 .5 10.500.5zM13.500 7C9 7 7 9.500 7 12.500S9 17.500 12 17.500s5-2 5-4.500-2-3.500-4-3-2 2-1 3"
            fill="#1596ea"
          />
          <path d="M4 18c3 4 12 5 16 0" fill="none" stroke="#6fd0ff" strokeWidth="1.500" />
          <circle cx="12" cy="12.500" r="4" fill="#03293f" />
          <path d="M12 11.500h5c.3 4-2 6-5.500 6" fill="none" stroke="#1596ea" strokeWidth="2" />
        </TaskIcon>
        <button type="button" aria-label="钢筋算量" className="flex h-10 w-12 shrink-0 items-center justify-center border-b-2 border-[#76b9ed] bg-[#33393c]">
          <AppLogo className="size-6" />
        </button>
        <TaskIcon label="安全浏览器" running>
          <circle cx="12" cy="12" r="10.500" fill="#5cba26" stroke="#e3f5d6" strokeWidth="1.200" />
          <path d="M6 11.500C6 4.500 18 4.500 18 11.500zM6 13.500h12c-1.500 1.500-2.500 1-3.500 2-1.500 1-4 .5-4.500-1" fill="#fff" />
          <path d="M7 14.500c1.500 4.500 7 5 10 2" fill="none" stroke="#fff" strokeWidth="2.200" />
          <path d="M9.500 11.500c0-3 5-3 5 0z" fill="#5cba26" />
          <path d="M2.500 22.500C9 20 19 12 22.500 2" fill="none" stroke="#3c9a10" strokeWidth="1.200" />
        </TaskIcon>
      </div>
      <div className="ml-auto flex items-center">
        <svg viewBox="0 0 12 8" className="mr-[11px] h-2 w-3" aria-hidden="true"><path d="M.5 7 6 1.500 11.500 7" fill="none" stroke="#fff" strokeWidth="1.200" /></svg>
        <svg viewBox="0 0 16 12" className="mr-[11px] h-3 w-4" aria-hidden="true"><path d="M4.500 4.500h10v6h-10zM2.500 5v3c0 2 1 2.500 2 2.500M1 0v2M4 0v2M.5 2.500h4v2h-4zM15.500 6v3" fill="none" stroke="#fff" /><path d="M6 6h7v3H6z" fill="#fff" /></svg>
        <svg viewBox="0 0 14 14" className="mr-2 size-[14px]" aria-hidden="true"><path d="M1 12C1 5 6 1 13 1M4 12.500c0-5 4-8 9-8M7 13c0-3 3-5 6-5" fill="none" stroke="#ccc" strokeWidth="1.200" /><circle cx="11.500" cy="12" r="1.500" fill="#fff" /></svg>
        <svg viewBox="0 0 17 14" className="mr-2 h-[14px] w-[17px]" aria-hidden="true"><path d="M1 5h2.500L7 1.500v11L3.500 9H1zM9 4.500c1.300 1.500 1.300 3.500 0 5M11.500 3c2 2.500 2 5.500 0 8M13.500 1c3 3.500 3 8.500 0 12" fill="none" stroke="#ddd" /></svg>
        <span className="mr-[13px] text-[14px] leading-5">中</span>
        <SogouMark className="mr-5 size-4" />
        <div className="w-[52px] text-center text-[12px] leading-[19px]">
          <div>18:11</div>
          <div>2017/7/7</div>
        </div>
        <button type="button" aria-label="操作中心" className="flex h-10 w-[59px] items-center justify-center border-r border-[#555] bg-black">
          <svg viewBox="0 0 16 16" className="size-4"><path d="M.5.500h15v11H11L8 14.500 5 11.500H.5z" fill="none" stroke="#fff" /></svg>
        </button>
        <span className="h-10 w-1 bg-black" />
      </div>
    </div>
  );
}

export default function App() {
  return (
    <div className={`relative flex min-h-screen flex-col overflow-hidden bg-[#f0f0f0] text-black ${UI_FONT}`}>
      <TitleBar />
      <MenuBar />
      <MainToolBar />
      <main className="flex flex-1">
        <ModulePanel />
        <div className="ml-[6px] flex min-w-0 flex-1 flex-col">
          <ComponentToolBar />
          <div className="flex flex-1">
            <ComponentPanel />
            <PropertyPanel />
          </div>
        </div>
      </main>
      <StatusBar />
      <TaskBar />
      <ImeBar />
      <div className="absolute -top-[27px] left-[1184px] flex size-[45px] items-end justify-center rounded-full border-2 border-[#dfe8df] bg-[#3dc45a] pb-[3px] text-[11px] font-bold leading-[13px] text-white shadow-md">
        66
      </div>
    </div>
  );
}
